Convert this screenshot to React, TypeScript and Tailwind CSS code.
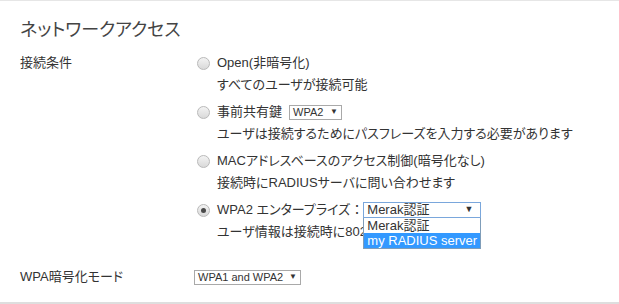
import React from "react";

const font = { fontFamily: '"Liberation Sans", "Noto Sans CJK JP", sans-serif' };

function Radio({ checked = false }: { checked?: boolean }) {
  return (
    <span className="flex h-[13px] w-[13px] shrink-0 items-center justify-center rounded-full border border-[#b9b9b9] bg-gradient-to-b from-[#f3f3f3] to-[#d9d9d9]">
      {checked && <span className="h-[5px] w-[5px] rounded-full bg-[#4a4a4a]" />}
    </span>
  );
}

function Option({
  title,
  desc,
  checked,
  extra,
}: {
  title: React.ReactNode;
  desc: string;
  checked?: boolean;
  extra?: React.ReactNode;
}) {
  return (
    <div className="mb-[7px]">
      <div className="flex h-5 items-center">
        <span className="ml-px mr-[7px]">
          <Radio checked={checked} />
        </span>
        <span>{title}</span>
        {extra}
      </div>
      <div className="mt-[2px] h-5 pl-[21px] leading-5">{desc}</div>
    </div>
  );
}

export default function App() {
  return (
    <div
      style={font}
      className="h-[304px] w-[619px] overflow-hidden border-t border-b-2 border-t-[#e6e6e6] border-b-[#dedede] bg-white px-5 text-[13px] text-[#333] [font-feature-settings:'palt']"
    >
      <h1 className="mt-[17px] text-[18px] leading-6 text-[#444]">ネットワークアクセス</h1>

      <div className="mt-[11px] flex">
        <div className="h-5 w-[176px] leading-5">接続条件</div>
        <div className="flex-1">
          <Option title="Open(非暗号化)" desc="すべてのユーザが接続可能" />
          <Option
            title="事前共有鍵"
            desc="ユーザは接続するためにパスフレーズを入力する必要があります"
            extra={
              <span className="ml-[7px] flex h-[15px] w-[53px] items-center justify-between border border-[#a9a9a9] px-[3px] text-[11px]">
                <span>WPA2</span>
                <span className="text-[8px]">▼</span>
              </span>
            }
          />
          <Option title="MACアドレスベースのアクセス制御(暗号化なし)" desc="接続時にRADIUSサーバに問い合わせます" />
          <Option
            checked
            title="WPA2 エンタープライズ ："
            desc="ユーザ情報は接続時に802.1Xで認証されます"
            extra={
              <span className="relative ml-[3px]">
                <span className="flex h-[16px] w-[118px] items-center justify-between border border-[#7aa7dc] px-[3px]">
                  <span>Merak認証</span>
                  <span className="mr-[4px] text-[9px]">▼</span>
                </span>
                <span className="absolute left-0 top-[16px] z-10 flex w-[118px] flex-col border border-t-0 border-[#7f9db9] bg-white">
                  <span className="h-[15px] px-[3px] leading-[15px]">Merak認証</span>
                  <span className="h-[15px] bg-[#3399ff] px-[3px] leading-[15px] text-white">my RADIUS server</span>
                </span>
              </span>
            }
          />
        </div>
      </div>

      <div className="mt-[18px] flex items-center">
        <div className="h-5 w-[174px] leading-5">WPA暗号化モード</div>
        <span className="flex h-[15px] w-[107px] items-center justify-between border border-[#a9a9a9] px-[3px] text-[11px]">
          <span>WPA1 and WPA2</span>
          <span className="text-[8px]">▼</span>
        </span>
      </div>
    </div>
  );
}
